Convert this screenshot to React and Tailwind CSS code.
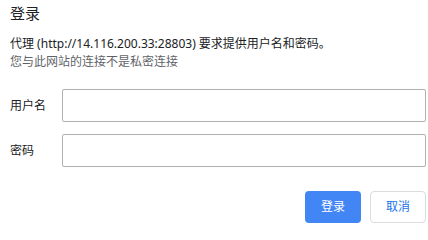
export default function App() {
    const font = { fontFamily: '"Noto Sans", "Noto Sans CJK SC", sans-serif' };
    return (
        <div className="w-[428px] h-[232px] bg-white text-[#202124] px-[10px] pt-[3px]" style={font}>
            {/* Header */}
            <h1 className="text-[15px] leading-[20px]">登录</h1>
            <p className="mt-[12px] text-[12px] leading-[18px] text-[#202124]">
                代理 (http://14.116.200.33:28803) 要求提供用户名和密码。
            </p>
            <p className="text-[12px] leading-[18px] text-[#5f6368]">您与此网站的连接不是私密连接</p>

            {/* Fields */}
            <div className="mt-[18px] flex flex-col gap-[12px] -mr-[8px]">
                <div className="flex items-center">
                    <label className="w-[52px] text-[12px]">用户名</label>
                    <input className="flex-1 h-[33px] border border-[#b0b0b0] rounded-[2px] outline-none px-2 text-[13px]" />
                </div>
                <div className="flex items-center">
                    <label className="w-[52px] text-[12px]">密码</label>
                    <input type="password" className="flex-1 h-[33px] border border-[#b0b0b0] rounded-[2px] outline-none px-2 text-[13px]" />
                </div>
            </div>

            {/* Actions */}
            <div className="mt-[24px] flex justify-end gap-[9px] -mr-[8px]">
                <button className="w-[56px] h-[32px] rounded-[4px] bg-[#4285f4] text-white text-[12px]">登录</button>
                <button className="w-[56px] h-[32px] rounded-[4px] border border-[#dadce0] bg-white text-[#1a73e8] text-[12px]">取消</button>
            </div>
        </div>
    );
}
